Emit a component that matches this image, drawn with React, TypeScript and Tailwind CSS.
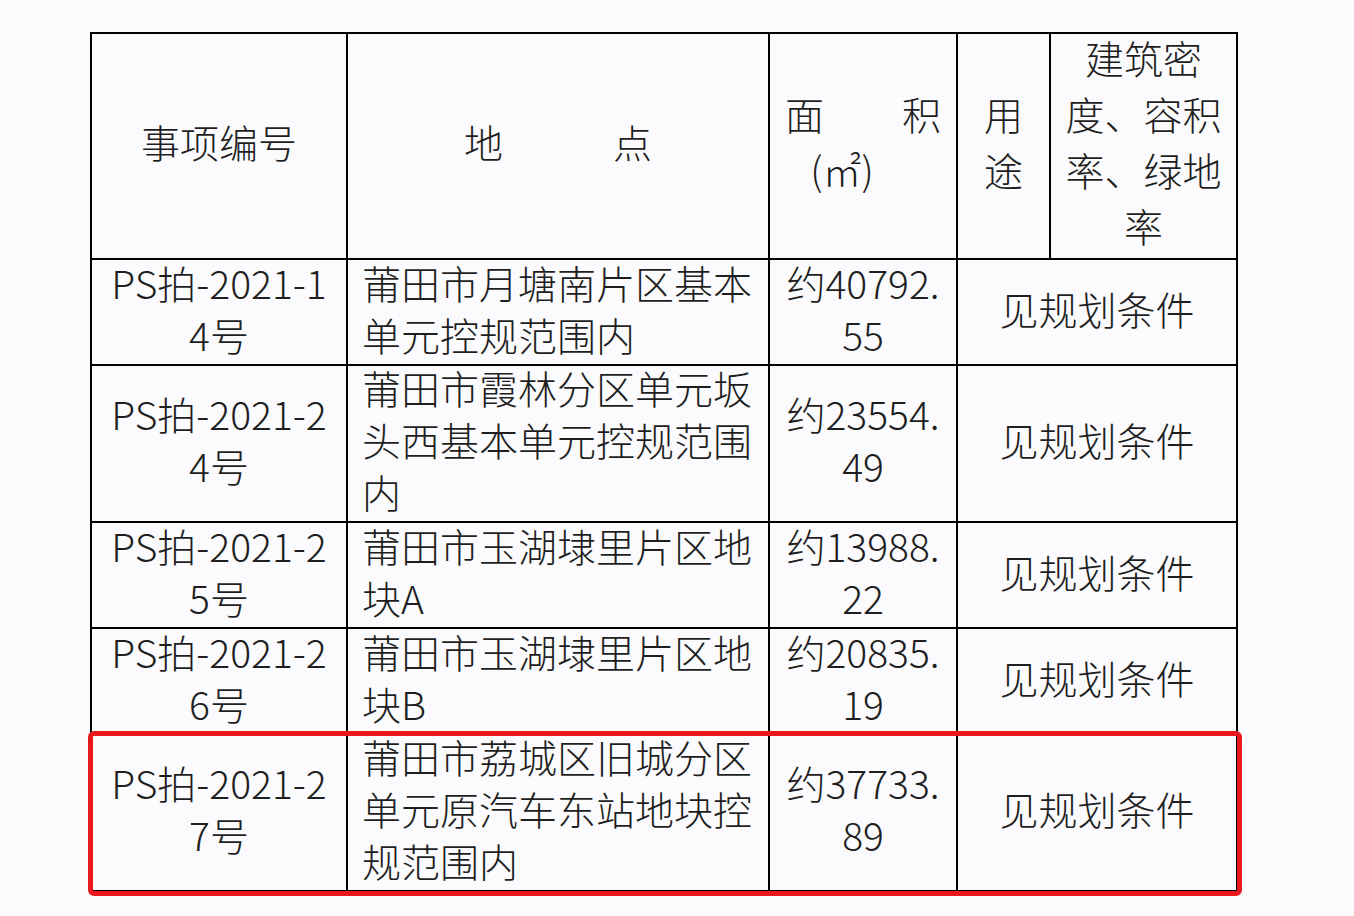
import React from "react";

const font = { fontFamily: '"Noto Sans CJK SC", "Noto Sans", sans-serif' };

type Row = { id: [string, string]; loc: string[]; area: [string, string]; h: string };

const rows: Row[] = [
  { id: ["PS拍-2021-1", "4号"], loc: ["莆田市月塘南片区基本", "单元控规范围内"], area: ["约40792.", "55"], h: "h-[106px]" },
  { id: ["PS拍-2021-2", "4号"], loc: ["莆田市霞林分区单元坂", "头西基本单元控规范围", "内"], area: ["约23554.", "49"], h: "h-[157px]" },
  { id: ["PS拍-2021-2", "5号"], loc: ["莆田市玉湖埭里片区地", "块A"], area: ["约13988.", "22"], h: "h-[106px]" },
  { id: ["PS拍-2021-2", "6号"], loc: ["莆田市玉湖埭里片区地", "块B"], area: ["约20835.", "19"], h: "h-[106px]" },
  { id: ["PS拍-2021-2", "7号"], loc: ["莆田市荔城区旧城分区", "单元原汽车东站地块控", "规范围内"], area: ["约37733.", "89"], h: "h-[157px]" },
];

export default function App() {
  return (
    <div className="w-[1354px] h-[916px] bg-[#fbfbfd] text-[#1e1e1e] overflow-hidden" style={font}>
      <div className="relative ml-[90px] pt-[32px] w-[1150px]">
        <table className="table-fixed border-collapse border-2 border-black text-[39px] font-light">
          <colgroup>
            <col className="w-[256px]" />
            <col className="w-[422px]" />
            <col className="w-[188px]" />
            <col className="w-[93px]" />
            <col className="w-[187px]" />
          </colgroup>
          <tbody>
            <tr className="h-[226px] leading-[56px]">
              <td className="border-2 border-black text-center align-middle">
                <div className="-mt-[10px]">事项编号</div>
              </td>
              <td className="border-2 border-black align-middle">
                <div className="flex justify-center gap-[110px] -mt-[10px]">
                  <span>地</span>
                  <span>点</span>
                </div>
              </td>
              <td className="border-2 border-black align-middle px-[15px]">
                <div className="-mt-[10px]">
                  <div className="flex justify-between">
                    <span>面</span>
                    <span>积</span>
                  </div>
                  <div className="text-center pr-[42px]">(㎡)</div>
                </div>
              </td>
              <td className="border-2 border-black align-middle text-center">
                <div className="-mt-[10px]">
                  <div>用</div>
                  <div>途</div>
                </div>
              </td>
              <td className="border-2 border-black align-middle text-center whitespace-nowrap">
                <div className="-mt-[10px]">
                  <div>建筑密</div>
                  <div>度、容积</div>
                  <div>率、绿地</div>
                  <div>率</div>
                </div>
              </td>
            </tr>
            {rows.map((r, i) => (
              <tr key={i} className={`${r.h} leading-[52px]`}>
                <td className="border-2 border-black text-center align-middle whitespace-nowrap">
                  <div className="-mt-[9px]">
                    <div>{r.id[0]}</div>
                    <div>{r.id[1]}</div>
                  </div>
                </td>
                <td className="border-2 border-black align-middle pl-[14px] whitespace-nowrap">
                  <div className="-mt-[9px]">
                    {r.loc.map((l, j) => (
                      <div key={j}>{l}</div>
                    ))}
                  </div>
                </td>
                <td className="border-2 border-black text-center align-middle whitespace-nowrap">
                  <div className="-mt-[9px]">
                    <div>{r.area[0]}</div>
                    <div>{r.area[1]}</div>
                  </div>
                </td>
                <td colSpan={2} className="border-2 border-black text-center align-middle whitespace-nowrap">
                  <div className="-mt-[9px]">见规划条件</div>
                </td>
              </tr>
            ))}
          </tbody>
        </table>
        <div className="absolute left-[-2px] top-[731px] w-[1154px] h-[165px] border-[5px] border-[#e8191c] rounded-[6px] pointer-events-none" />
      </div>
    </div>
  );
}
